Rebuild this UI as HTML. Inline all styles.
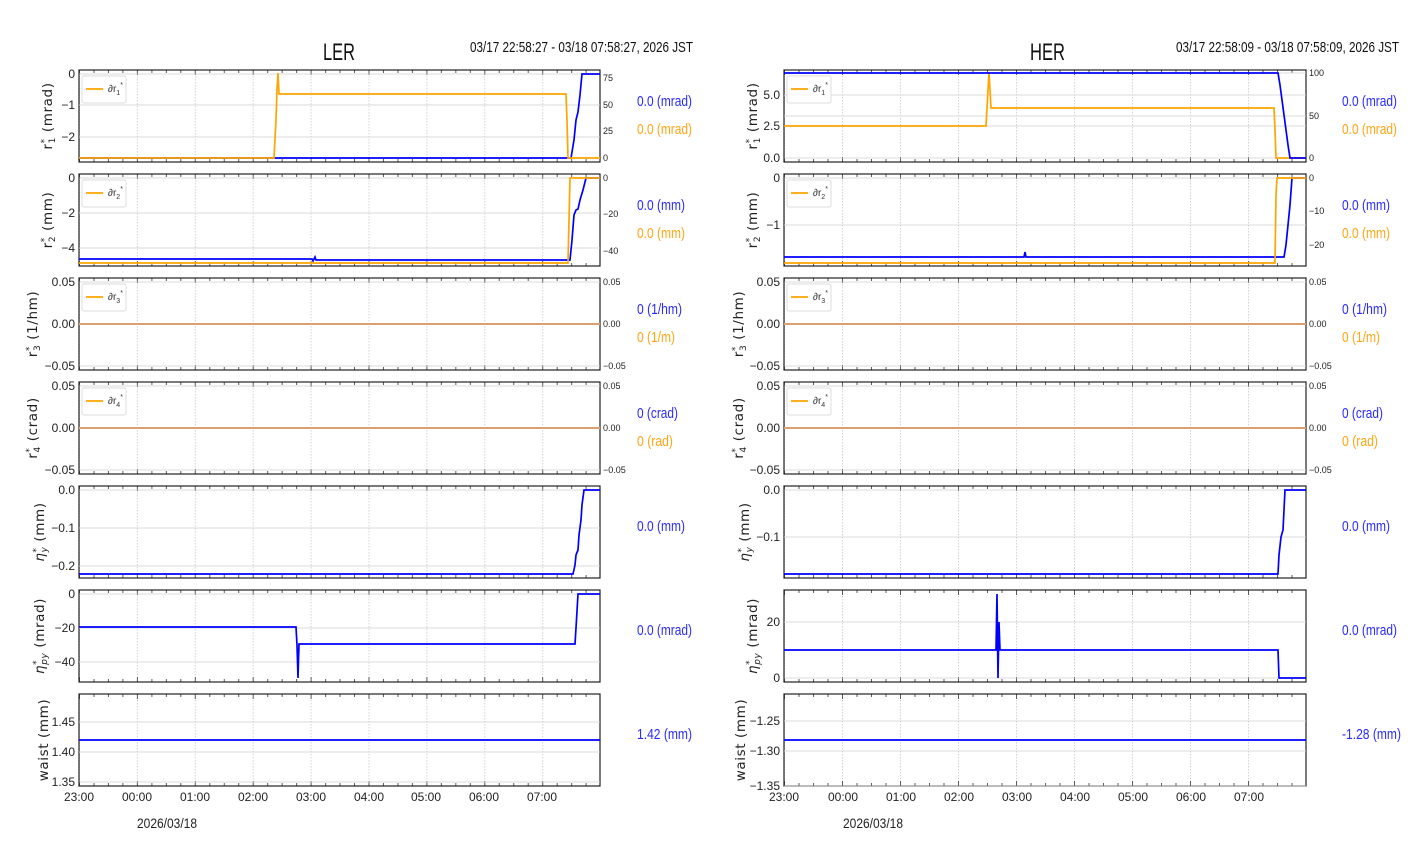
<!DOCTYPE html>
<html><head><meta charset="utf-8"><style>
html,body{margin:0;padding:0;background:#fff;}
svg{display:block;font-family:"Liberation Sans Narrow","Liberation Sans",sans-serif;}
.yt{font-size:12px;text-anchor:end;fill:#222}
.rt{font-size:9px;fill:#222}
.xt{font-size:12px;text-anchor:middle;fill:#222}
.yl{font-family:"DejaVu Sans",sans-serif;font-size:13.5px;text-anchor:middle;fill:#222;letter-spacing:0.6px}
.vb{font-size:15px;fill:#2a2aff}
.vo{font-size:15px;fill:#ffa514}
.hg{stroke:#d0d0d0;stroke-width:0.8}
.fr{fill:none;stroke:#222;stroke-width:1.2}
.b{fill:none;stroke:#0000ff;stroke-width:1.7}
.o{fill:none;stroke:#ffa500;stroke-width:1.7}
.lg{font-size:10px;fill:#333}
</style></head><body>
<svg width="1412" height="864" viewBox="0 0 1412 864">
<defs>
<pattern id="pL" patternUnits="userSpaceOnUse" x="79" y="0" width="57.9" height="92">
<line x1="0.5" y1="0" x2="0.5" y2="92" stroke="#c8c8c8" stroke-width="0.8" stroke-dasharray="1.5,1.5"/>
<path d="M0.5 0v5M0.5 92v-5M15 0v3M15 92v-3M29.45 0v3M29.45 92v-3M43.9 0v3M43.9 92v-3" stroke="#333" stroke-width="0.8"/>
</pattern>
<pattern id="pR" patternUnits="userSpaceOnUse" x="784" y="0" width="58" height="92">
<line x1="0.5" y1="0" x2="0.5" y2="92" stroke="#c8c8c8" stroke-width="0.8" stroke-dasharray="1.5,1.5"/>
<path d="M0.5 0v5M0.5 92v-5M15 0v3M15 92v-3M29.5 0v3M29.5 92v-3M44 0v3M44 92v-3" stroke="#333" stroke-width="0.8"/>
</pattern>
<g id="gL"><rect x="79" y="0" width="521" height="92" fill="url(#pL)"/><rect x="79" y="0" width="521" height="92" class="fr"/></g>
<g id="gR"><rect x="784" y="0" width="522" height="92" fill="url(#pR)"/><rect x="784" y="0" width="522" height="92" class="fr"/></g>
</defs>

<!-- Titles -->
<text x="323" y="60" font-size="24" fill="#111" textLength="32" lengthAdjust="spacingAndGlyphs">LER</text>
<text x="470" y="52" font-size="15" fill="#111" textLength="223" lengthAdjust="spacingAndGlyphs">03/17 22:58:27 - 03/18 07:58:27, 2026 JST</text>
<text x="1030" y="60" font-size="24" fill="#111" textLength="35" lengthAdjust="spacingAndGlyphs">HER</text>
<text x="1176" y="52" font-size="15" fill="#111" textLength="223" lengthAdjust="spacingAndGlyphs">03/17 22:58:09 - 03/18 07:58:09, 2026 JST</text>

<!-- ============ LEFT ============ -->
<g transform="translate(0,70)"><use href="#gL"/></g>
<path class="hg" d="M79 74H600M79 105H600M79 137H600"/>
<text class="yt" x="75" y="78">0</text><text class="yt" x="75" y="109">−1</text><text class="yt" x="75" y="141">−2</text>
<text class="rt" x="603" y="81">75</text><text class="rt" x="603" y="108">50</text><text class="rt" x="603" y="134">25</text><text class="rt" x="603" y="161">0</text>
<path class="b" d="M79 158H571L574 140L576 120L578 112L580 95L582 74H600"/>
<path class="o" d="M79 158H274L276 120L277 90L278 73L279 94H566L567 120L568 158H600"/>
<rect x="82" y="76" width="44" height="27" rx="2" fill="#fff" stroke="#ddd"/>
<line x1="86" y1="89" x2="103" y2="89" class="o"/><text class="lg" x="108" y="92">∂r<tspan font-size="7" dy="3">1</tspan><tspan font-size="7" dy="-8">*</tspan></text>
<text class="yl" transform="translate(52,116) rotate(-90)">r<tspan font-size="9" dy="-5">*</tspan><tspan font-size="9" dy="8" dx="-5">1</tspan><tspan dy="-3"> (mrad)</tspan></text>
<text class="vb" x="637" y="106" textLength="55" lengthAdjust="spacingAndGlyphs">0.0 (mrad)</text><text class="vo" x="637" y="134" textLength="55" lengthAdjust="spacingAndGlyphs">0.0 (mrad)</text>

<g transform="translate(0,174)"><use href="#gL"/></g>
<path class="hg" d="M79 178H600M79 213H600M79 248H600"/>
<text class="yt" x="75" y="182">0</text><text class="yt" x="75" y="217">−2</text><text class="yt" x="75" y="252">−4</text>
<text class="rt" x="603" y="181">0</text><text class="rt" x="603" y="217">−20</text><text class="rt" x="603" y="254">−40</text>
<path class="b" d="M79 259H312L313 261L315 257L316 260H570L572 240L574 215L576 210L578 209L580 200L583 190L586 178H600"/>
<path class="o" d="M79 263H568L570 178H600"/>
<rect x="82" y="180" width="44" height="27" rx="2" fill="#fff" stroke="#ddd"/>
<line x1="86" y1="193" x2="103" y2="193" class="o"/><text class="lg" x="108" y="196">∂r<tspan font-size="7" dy="3">2</tspan><tspan font-size="7" dy="-8">*</tspan></text>
<text class="yl" transform="translate(52,220) rotate(-90)">r<tspan font-size="9" dy="-5">*</tspan><tspan font-size="9" dy="8" dx="-5">2</tspan><tspan dy="-3"> (mm)</tspan></text>
<text class="vb" x="637" y="210" textLength="48" lengthAdjust="spacingAndGlyphs">0.0 (mm)</text><text class="vo" x="637" y="238" textLength="48" lengthAdjust="spacingAndGlyphs">0.0 (mm)</text>

<g transform="translate(0,278)"><use href="#gL"/></g>
<path class="hg" d="M79 282H600M79 366H600"/>
<text class="yt" x="75" y="286">0.05</text><text class="yt" x="75" y="328">0.00</text><text class="yt" x="75" y="370">−0.05</text>
<text class="rt" x="603" y="285">0.05</text><text class="rt" x="603" y="327">0.00</text><text class="rt" x="603" y="369">−0.05</text>
<path d="M79 324H600" stroke="#d9a070" stroke-width="2" fill="none"/>
<rect x="82" y="284" width="44" height="27" rx="2" fill="#fff" stroke="#ddd"/>
<line x1="86" y1="297" x2="103" y2="297" class="o"/><text class="lg" x="108" y="300">∂r<tspan font-size="7" dy="3">3</tspan><tspan font-size="7" dy="-8">*</tspan></text>
<text class="yl" transform="translate(37,324) rotate(-90)">r<tspan font-size="9" dy="-5">*</tspan><tspan font-size="9" dy="8" dx="-5">3</tspan><tspan dy="-3"> (1/hm)</tspan></text>
<text class="vb" x="637" y="314" textLength="45" lengthAdjust="spacingAndGlyphs">0 (1/hm)</text><text class="vo" x="637" y="342" textLength="38" lengthAdjust="spacingAndGlyphs">0 (1/m)</text>

<g transform="translate(0,382)"><use href="#gL"/></g>
<path class="hg" d="M79 386H600M79 470H600"/>
<text class="yt" x="75" y="390">0.05</text><text class="yt" x="75" y="432">0.00</text><text class="yt" x="75" y="474">−0.05</text>
<text class="rt" x="603" y="389">0.05</text><text class="rt" x="603" y="431">0.00</text><text class="rt" x="603" y="473">−0.05</text>
<path d="M79 428H600" stroke="#d9a070" stroke-width="2" fill="none"/>
<rect x="82" y="388" width="44" height="27" rx="2" fill="#fff" stroke="#ddd"/>
<line x1="86" y1="401" x2="103" y2="401" class="o"/><text class="lg" x="108" y="404">∂r<tspan font-size="7" dy="3">4</tspan><tspan font-size="7" dy="-8">*</tspan></text>
<text class="yl" transform="translate(37,428) rotate(-90)">r<tspan font-size="9" dy="-5">*</tspan><tspan font-size="9" dy="8" dx="-5">4</tspan><tspan dy="-3"> (crad)</tspan></text>
<text class="vb" x="637" y="418" textLength="41" lengthAdjust="spacingAndGlyphs">0 (crad)</text><text class="vo" x="637" y="446" textLength="36" lengthAdjust="spacingAndGlyphs">0 (rad)</text>

<g transform="translate(0,486)"><use href="#gL"/></g>
<path class="hg" d="M79 490H600M79 528H600M79 566H600"/>
<text class="yt" x="75" y="494">0.0</text><text class="yt" x="75" y="532">−0.1</text><text class="yt" x="75" y="570">−0.2</text>
<path class="b" d="M79 574H573L575 565L576 555L578 550L579 535L581 520L582 505L584 490H600"/>
<text class="yl" transform="translate(44,532) rotate(-90)"><tspan font-style="italic">η</tspan><tspan font-size="9" dy="-5">*</tspan><tspan font-size="9" dy="8" dx="-5" font-style="italic">y</tspan><tspan dy="-3"> (mm)</tspan></text>
<text class="vb" x="637" y="531" textLength="48" lengthAdjust="spacingAndGlyphs">0.0 (mm)</text>

<g transform="translate(0,590)"><use href="#gL"/></g>
<path class="hg" d="M79 594H600M79 628H600M79 662H600"/>
<text class="yt" x="75" y="598">0</text><text class="yt" x="75" y="632">−20</text><text class="yt" x="75" y="666">−40</text>
<path class="b" d="M79 627H296L297 645L298 678L298.5 660L299 644H575L576 628L577 611L578 594H600"/>
<text class="yl" transform="translate(44,636) rotate(-90)"><tspan font-style="italic">η</tspan><tspan font-size="9" dy="-5">*</tspan><tspan font-size="9" dy="8" dx="-5" font-style="italic">py</tspan><tspan dy="-3"> (mrad)</tspan></text>
<text class="vb" x="637" y="635" textLength="55" lengthAdjust="spacingAndGlyphs">0.0 (mrad)</text>

<g transform="translate(0,694)"><use href="#gL"/></g>
<path class="hg" d="M79 722H600M79 752H600M79 782H600"/>
<text class="yt" x="75" y="726">1.45</text><text class="yt" x="75" y="756">1.40</text><text class="yt" x="75" y="786">1.35</text>
<path class="b" d="M79 740H600"/>
<text class="yl" transform="translate(48,740) rotate(-90)">waist (mm)</text>
<text class="vb" x="637" y="739" textLength="55" lengthAdjust="spacingAndGlyphs">1.42 (mm)</text>

<g class="xt"><text x="79" y="801">23:00</text><text x="137" y="801">00:00</text><text x="195" y="801">01:00</text><text x="253" y="801">02:00</text><text x="311" y="801">03:00</text><text x="369" y="801">04:00</text><text x="426" y="801">05:00</text><text x="484" y="801">06:00</text><text x="542" y="801">07:00</text>
<text x="167" y="828" font-size="14" textLength="60" lengthAdjust="spacingAndGlyphs">2026/03/18</text></g>

<!-- ============ RIGHT ============ -->
<g transform="translate(0,70)"><use href="#gR"/></g>
<path class="hg" d="M784 73H1306M784 95H1306M784 116H1306M784 126H1306M784 158H1306"/>
<text class="yt" x="780" y="99">5.0</text><text class="yt" x="780" y="130">2.5</text><text class="yt" x="780" y="162">0.0</text>
<text class="rt" x="1309" y="76">100</text><text class="rt" x="1309" y="119">50</text><text class="rt" x="1309" y="161">0</text>
<path class="o" d="M784 126H986L987 108L988 90L989 73L990 90L991 108H1274L1275 130L1276 158H1306"/>
<path class="b" d="M784 73H1278L1280 85L1282 100L1284 115L1286 130L1288 145L1290 158H1306"/>
<rect x="787" y="76" width="44" height="27" rx="2" fill="#fff" stroke="#ddd"/>
<line x1="791" y1="89" x2="808" y2="89" class="o"/><text class="lg" x="813" y="92">∂r<tspan font-size="7" dy="3">1</tspan><tspan font-size="7" dy="-8">*</tspan></text>
<text class="yl" transform="translate(757,116) rotate(-90)">r<tspan font-size="9" dy="-5">*</tspan><tspan font-size="9" dy="8" dx="-5">1</tspan><tspan dy="-3"> (mrad)</tspan></text>
<text class="vb" x="1342" y="106" textLength="55" lengthAdjust="spacingAndGlyphs">0.0 (mrad)</text><text class="vo" x="1342" y="134" textLength="55" lengthAdjust="spacingAndGlyphs">0.0 (mrad)</text>

<g transform="translate(0,174)"><use href="#gR"/></g>
<path class="hg" d="M784 178H1306M784 225H1306"/>
<text class="yt" x="780" y="182">0</text><text class="yt" x="780" y="229">−1</text>
<text class="rt" x="1309" y="181">0</text><text class="rt" x="1309" y="214">−10</text><text class="rt" x="1309" y="248">−20</text>
<path class="b" d="M784 257H1024L1025 252L1026 257H1284L1286 245L1288 225L1290 205L1292 178H1306"/>
<path class="o" d="M784 263H1275L1276 195L1277 178H1306"/>
<rect x="787" y="180" width="44" height="27" rx="2" fill="#fff" stroke="#ddd"/>
<line x1="791" y1="193" x2="808" y2="193" class="o"/><text class="lg" x="813" y="196">∂r<tspan font-size="7" dy="3">2</tspan><tspan font-size="7" dy="-8">*</tspan></text>
<text class="yl" transform="translate(757,220) rotate(-90)">r<tspan font-size="9" dy="-5">*</tspan><tspan font-size="9" dy="8" dx="-5">2</tspan><tspan dy="-3"> (mm)</tspan></text>
<text class="vb" x="1342" y="210" textLength="48" lengthAdjust="spacingAndGlyphs">0.0 (mm)</text><text class="vo" x="1342" y="238" textLength="48" lengthAdjust="spacingAndGlyphs">0.0 (mm)</text>

<g transform="translate(0,278)"><use href="#gR"/></g>
<path class="hg" d="M784 282H1306M784 366H1306"/>
<text class="yt" x="780" y="286">0.05</text><text class="yt" x="780" y="328">0.00</text><text class="yt" x="780" y="370">−0.05</text>
<text class="rt" x="1309" y="285">0.05</text><text class="rt" x="1309" y="327">0.00</text><text class="rt" x="1309" y="369">−0.05</text>
<path d="M784 324H1306" stroke="#d9a070" stroke-width="2" fill="none"/>
<rect x="787" y="284" width="44" height="27" rx="2" fill="#fff" stroke="#ddd"/>
<line x1="791" y1="297" x2="808" y2="297" class="o"/><text class="lg" x="813" y="300">∂r<tspan font-size="7" dy="3">3</tspan><tspan font-size="7" dy="-8">*</tspan></text>
<text class="yl" transform="translate(743,324) rotate(-90)">r<tspan font-size="9" dy="-5">*</tspan><tspan font-size="9" dy="8" dx="-5">3</tspan><tspan dy="-3"> (1/hm)</tspan></text>
<text class="vb" x="1342" y="314" textLength="45" lengthAdjust="spacingAndGlyphs">0 (1/hm)</text><text class="vo" x="1342" y="342" textLength="38" lengthAdjust="spacingAndGlyphs">0 (1/m)</text>

<g transform="translate(0,382)"><use href="#gR"/></g>
<path class="hg" d="M784 386H1306M784 470H1306"/>
<text class="yt" x="780" y="390">0.05</text><text class="yt" x="780" y="432">0.00</text><text class="yt" x="780" y="474">−0.05</text>
<text class="rt" x="1309" y="389">0.05</text><text class="rt" x="1309" y="431">0.00</text><text class="rt" x="1309" y="473">−0.05</text>
<path d="M784 428H1306" stroke="#d9a070" stroke-width="2" fill="none"/>
<rect x="787" y="388" width="44" height="27" rx="2" fill="#fff" stroke="#ddd"/>
<line x1="791" y1="401" x2="808" y2="401" class="o"/><text class="lg" x="813" y="404">∂r<tspan font-size="7" dy="3">4</tspan><tspan font-size="7" dy="-8">*</tspan></text>
<text class="yl" transform="translate(743,428) rotate(-90)">r<tspan font-size="9" dy="-5">*</tspan><tspan font-size="9" dy="8" dx="-5">4</tspan><tspan dy="-3"> (crad)</tspan></text>
<text class="vb" x="1342" y="418" textLength="41" lengthAdjust="spacingAndGlyphs">0 (crad)</text><text class="vo" x="1342" y="446" textLength="36" lengthAdjust="spacingAndGlyphs">0 (rad)</text>

<g transform="translate(0,486)"><use href="#gR"/></g>
<path class="hg" d="M784 490H1306M784 537H1306"/>
<text class="yt" x="780" y="494">0.0</text><text class="yt" x="780" y="541">−0.1</text>
<path class="b" d="M784 574H1278L1279 555L1281 537L1283 530L1284 510L1285 490H1306"/>
<text class="yl" transform="translate(749,532) rotate(-90)"><tspan font-style="italic">η</tspan><tspan font-size="9" dy="-5">*</tspan><tspan font-size="9" dy="8" dx="-5" font-style="italic">y</tspan><tspan dy="-3"> (mm)</tspan></text>
<text class="vb" x="1342" y="531" textLength="48" lengthAdjust="spacingAndGlyphs">0.0 (mm)</text>

<g transform="translate(0,590)"><use href="#gR"/></g>
<path class="hg" d="M784 622H1306M784 678H1306"/>
<text class="yt" x="780" y="626">20</text><text class="yt" x="780" y="682">0</text>
<path class="b" d="M784 650H996L997 594L998 678L999 622L1000 650H1278L1279 678H1306"/>
<text class="yl" transform="translate(757,636) rotate(-90)"><tspan font-style="italic">η</tspan><tspan font-size="9" dy="-5">*</tspan><tspan font-size="9" dy="8" dx="-5" font-style="italic">py</tspan><tspan dy="-3"> (mrad)</tspan></text>
<text class="vb" x="1342" y="635" textLength="55" lengthAdjust="spacingAndGlyphs">0.0 (mrad)</text>

<g transform="translate(0,694)"><use href="#gR"/></g>
<path class="hg" d="M784 721H1306M784 751H1306M784 786H1306"/>
<text class="yt" x="780" y="725">−1.25</text><text class="yt" x="780" y="755">−1.30</text><text class="yt" x="780" y="790">−1.35</text>
<path class="b" d="M784 740H1306"/>
<text class="yl" transform="translate(745,740) rotate(-90)">waist (mm)</text>
<text class="vb" x="1342" y="739" textLength="59" lengthAdjust="spacingAndGlyphs">-1.28 (mm)</text>

<g class="xt"><text x="784" y="801">23:00</text><text x="843" y="801">00:00</text><text x="901" y="801">01:00</text><text x="959" y="801">02:00</text><text x="1017" y="801">03:00</text><text x="1075" y="801">04:00</text><text x="1133" y="801">05:00</text><text x="1191" y="801">06:00</text><text x="1249" y="801">07:00</text>
<text x="873" y="828" font-size="14" textLength="60" lengthAdjust="spacingAndGlyphs">2026/03/18</text></g>
</svg>
</body></html>
